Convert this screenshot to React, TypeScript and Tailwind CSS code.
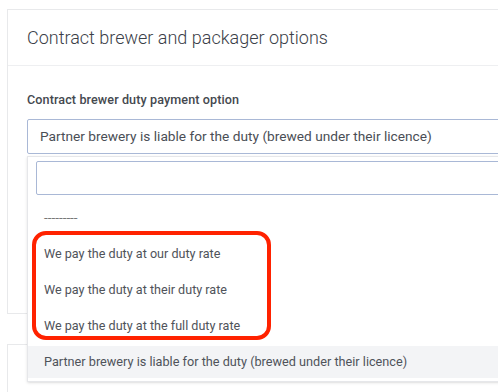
export default function App() {
  const options = [
    "We pay the duty at our duty rate",
    "We pay the duty at their duty rate",
    "We pay the duty at the full duty rate",
  ]

  return (
    <div className="h-[392px] w-[498px] overflow-hidden bg-white pl-[7px] pt-[9px] font-['Roboto',sans-serif]">
      <div className="w-[620px]">
        {/* Contract brewer card */}
        <div className="h-[305px] border border-[#e8e9eb] bg-white">
          <div className="flex h-[56px] items-center border-b border-[#eeeff1] pl-[19px]">
            <h2 className="text-[18px] font-light text-[#3b4048]">Contract brewer and packager options</h2>
          </div>
          <div className="pl-[19px] pt-[26px]">
            <label className="block text-[12.6px] font-medium leading-[16px] tracking-[0.1px] text-[#45494f]">
              Contract brewer duty payment option
            </label>
            <div className="relative mt-[11px]">
              <div className="flex h-[35px] w-[590px] items-center rounded-[2px] border border-[#a9b8d6] pl-[12px] text-[13.7px] text-[#4a4e55]">
                Partner brewery is liable for the duty (brewed under their licence)
              </div>

              {/* open dropdown */}
              <div className="absolute left-0 top-[37px] z-10 w-[590px] border border-[#e6e7ea] bg-white pb-[3px] shadow-sm">
                <div className="px-[8px] pt-[4px]">
                  <div className="h-[34px] w-full rounded-[2px] border border-[#a9b8d6]"></div>
                </div>
                <div className="mt-[5px]">
                  <div className="flex h-[36px] items-center pl-[16px] text-[13.5px] leading-none text-[#777]">---------</div>
                  {options.map((o) => (
                    <div key={o} className="flex h-[36px] items-center pl-[16px] text-[12.6px] text-[#4f535a]">
                      {o}
                    </div>
                  ))}
                  <div className="mt-[2px] flex h-[32px] items-center bg-[#f3f4f6] pl-[16px] text-[12.7px] text-[#4f535a]">
                    Partner brewery is liable for the duty (brewed under their licence)
                  </div>
                </div>
              </div>

              {/* annotation */}
              <div className="absolute left-[5px] top-[112px] z-20 h-[109px] w-[239px] rounded-[14px] border-4 border-[#ff2200]"></div>
            </div>
          </div>
        </div>

        {/* next card */}
        <div className="mt-[30px] h-[80px] border border-[#e8e9eb] bg-white"></div>
      </div>
    </div>
  )
}
